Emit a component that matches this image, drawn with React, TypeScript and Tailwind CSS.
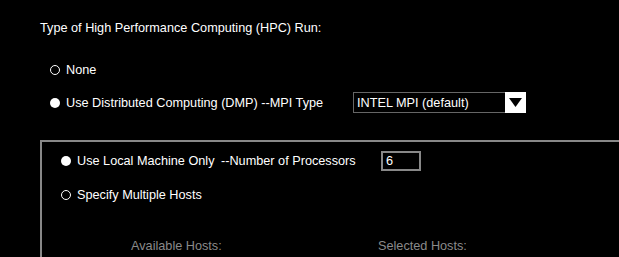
import React from 'react'

function Radio({ checked }: { checked?: boolean }) {
  return (
    <span
      className={
        checked
          ? 'inline-block w-[10px] h-[10px] rounded-full bg-white shrink-0'
          : 'inline-block w-[10px] h-[10px] rounded-full border border-white shrink-0'
      }
    />
  )
}

export default function App() {
  return (
    <div
      className="w-[619px] h-[257px] bg-black overflow-hidden text-white text-[12.7px] leading-[14px]"
      style={{ fontFamily: '"Liberation Sans", Arial, sans-serif' }}
    >
      {/* Title */}
      <div className="pl-[40px] pt-[21px] h-[35px]">Type of High Performance Computing (HPC) Run:</div>

      {/* HPC type radios */}
      <div className="mt-[25px] pl-[50px] h-[20px] flex items-center gap-[6px]">
        <Radio />
        <span>None</span>
      </div>
      <div className="mt-[12px] pl-[50px] h-[21px] flex items-center gap-[6px]">
        <Radio checked />
        <span className="w-[281px]">Use Distributed Computing (DMP) --MPI Type</span>
        <div className="w-[173px] h-[21px] border border-[#666] flex items-center justify-between">
          <span className="pl-[3px]">INTEL MPI (default)</span>
          <span className="w-[21px] h-[21px] -mr-px bg-white flex items-center justify-center">
            <svg width="13" height="9" viewBox="0 0 13 9">
              <path d="M0 0 H13 L6.5 9 Z" fill="#000" />
            </svg>
          </span>
        </div>
      </div>

      {/* Group box */}
      <div className="mt-[27px] ml-[40px] w-[620px] h-[200px] border-2 border-[#888] pl-[19px] pt-[9px]">
        <div className="h-[20px] flex items-center gap-[6px]">
          <Radio checked />
          <span className="w-[138px]">Use Local Machine Only</span>
          <span className="w-[154px]">--Number of Processors</span>
          <div className="w-[40px] h-[20px] border-2 border-[#888] flex items-center pl-[3px]">6</div>
        </div>
        <div className="mt-[14px] h-[20px] flex items-center gap-[6px]">
          <Radio />
          <span>Specify Multiple Hosts</span>
        </div>
        <div className="mt-[31px] h-[20px] flex items-center text-[#8a8a8a]">
          <span className="ml-[70px] w-[247px]">Available Hosts:</span>
          <span>Selected Hosts:</span>
        </div>
      </div>
    </div>
  )
}
